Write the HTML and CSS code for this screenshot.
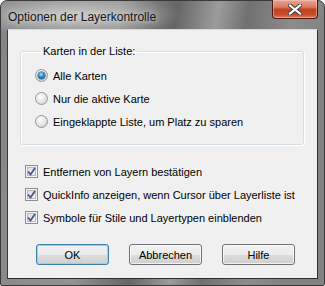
FILE: index.html
```html
<!DOCTYPE html>
<html>
<head>
<meta charset="utf-8">
<link rel="stylesheet" href="styles.css">
</head>
<body>
<div class="window">
  <div class="titlebar">
    <span class="title">Optionen der Layerkontrolle</span>
    <div class="close">
      <svg width="14" height="11" viewBox="0 0 14 11">
        <path d="M2 1.5 L12 9.5 M12 1.5 L2 9.5" stroke="#3d3d3d" stroke-width="4" stroke-linecap="square" fill="none"/>
        <path d="M2 1.5 L12 9.5 M12 1.5 L2 9.5" stroke="#ffffff" stroke-width="2.2" stroke-linecap="square" fill="none"/>
      </svg>
    </div>
  </div>
  <div class="client">
    <fieldset class="group">
      <legend>Karten in der Liste:</legend>
      <label class="row"><span class="radio checked"><span class="dot"></span></span>Alle Karten</label>
      <label class="row"><span class="radio"></span>Nur die aktive Karte</label>
      <label class="row"><span class="radio"></span>Eingeklappte Liste, um Platz zu sparen</label>
    </fieldset>
    <div class="checks">
      <label class="row"><span class="check"><svg width="9" height="9" viewBox="0 0 9 9"><path d="M1 4.5 L3.5 7.5 L8 1" stroke="#42588f" stroke-width="1.8" fill="none"/></svg></span>Entfernen von Layern bestätigen</label>
      <label class="row"><span class="check"><svg width="9" height="9" viewBox="0 0 9 9"><path d="M1 4.5 L3.5 7.5 L8 1" stroke="#42588f" stroke-width="1.8" fill="none"/></svg></span>QuickInfo anzeigen, wenn Cursor über Layerliste ist</label>
      <label class="row"><span class="check"><svg width="9" height="9" viewBox="0 0 9 9"><path d="M1 4.5 L3.5 7.5 L8 1" stroke="#42588f" stroke-width="1.8" fill="none"/></svg></span>Symbole für Stile und Layertypen einblenden</label>
    </div>
    <div class="buttons">
      <button class="btn default">OK</button>
      <button class="btn">Abbrechen</button>
      <button class="btn">Hilfe</button>
    </div>
  </div>
</div>
</body>
</html>
```
FILE: styles.css
```css
html, body {
  margin: 0;
  padding: 0;
  background: #ffffff;
}
.window {
  width: 325px;
  height: 286px;
  box-sizing: border-box;
  border: 1px solid #3a3a3a;
  border-radius: 7px 7px 2px 2px;
  padding: 0 6px 6px 6px;
  display: flex;
  flex-direction: column;
  background:
    radial-gradient(ellipse 110px 22px at 70px 14px, rgba(225,225,225,0.7), rgba(225,225,225,0) 100%),
    linear-gradient(100deg, #858585 0px, #929292 120px, #666666 175px, #9c9c9c 215px, #717171 245px, #8c8c8c 290px, #828282 325px);
  font-family: "Liberation Sans", Arial, sans-serif;
}
.titlebar {
  height: 28px;
  display: flex;
  align-items: flex-start;
}
.title {
  font-size: 12px;
  color: #151515;
  margin-top: 9px;
  margin-left: 1px;
  text-shadow: 0 0 6px rgba(255,255,255,0.9);
}
.close {
  margin-left: auto;
  margin-top: -1px;
  width: 46px;
  height: 19px;
  box-sizing: border-box;
  border: 1px solid #4a1a10;
  border-top: none;
  border-radius: 0 0 4px 4px;
  background: linear-gradient(#e8a595 0%, #d97a63 40%, #c5401f 52%, #c84a2b 80%, #dd7c60 100%);
  box-shadow: inset 0 0 0 1px rgba(255,210,200,0.45);
  display: flex;
  align-items: center;
  justify-content: center;
}
.close svg { display: block; }
.client {
  flex: 1;
  background: #f0f0f0;
  border: 1px solid;
  border-color: #d9d9d9 #2e2e2e #2e2e2e #3a3a3a;
  font-size: 11px;
  color: #000;
  padding: 0;
  display: flex;
  flex-direction: column;
}
.group {
  margin: 15px 13px 0 12px;
  padding: 6px 0 11px 14px;
  border: 1px solid #d5dfe5;
  border-radius: 3px;
  box-shadow: inset 1px 1px 0 #ffffff, 1px 1px 0 #ffffff;
}
.group legend {
  padding: 0 2px;
  margin-left: 6px;
  line-height: 13px;
  font-size: 11px;
}
.row {
  display: flex;
  align-items: center;
  height: 23px;
  white-space: nowrap;
}
.radio {
  width: 13px;
  height: 13px;
  box-sizing: border-box;
  border-radius: 50%;
  border: 1px solid #979797;
  background: radial-gradient(circle at 40% 35%, #ffffff 0%, #e6e6e6 50%, #c9c9c9 100%);
  margin-right: 5px;
  display: flex;
  align-items: center;
  justify-content: center;
  flex: none;
}
.radio .dot {
  width: 7px;
  height: 7px;
  border-radius: 50%;
  background: radial-gradient(circle at 45% 35%, #a8e2fb 0%, #3d8fc9 40%, #135a92 75%, #0c3d68 100%);
  box-shadow: 0 0 0 0.5px #1d4f7c;
}
.checks {
  margin: 15px 0 0 17px;
  display: flex;
  flex-direction: column;
}
.check {
  width: 13px;
  height: 13px;
  box-sizing: border-box;
  border: 1px solid #8e8f8f;
  background: linear-gradient(135deg, #d9d9d9, #f8f8f8);
  box-shadow: inset 0 0 0 1px #f4f4f4, inset 0 0 0 2px #b9bcbf;
  margin-right: 5px;
  display: flex;
  align-items: center;
  justify-content: center;
  flex: none;
}
.check svg { display: block; }
.buttons {
  margin: 15px 0 0 28px;
  display: flex;
  gap: 20px;
}
.btn {
  width: 73px;
  height: 21px;
  box-sizing: border-box;
  border: 1px solid #707070;
  border-radius: 3px;
  background: linear-gradient(#f2f2f2 0%, #ebebeb 50%, #dddddd 51%, #cfcfcf 100%);
  box-shadow: inset 0 0 0 1px rgba(255,255,255,0.7);
  font-family: "Liberation Sans", Arial, sans-serif;
  font-size: 11px;
  color: #000;
  padding: 0;
  margin: 0;
}
.btn.default {
  border-color: #3c7fb1;
  box-shadow: inset 0 0 0 1px #8ed6f5;
}
```
